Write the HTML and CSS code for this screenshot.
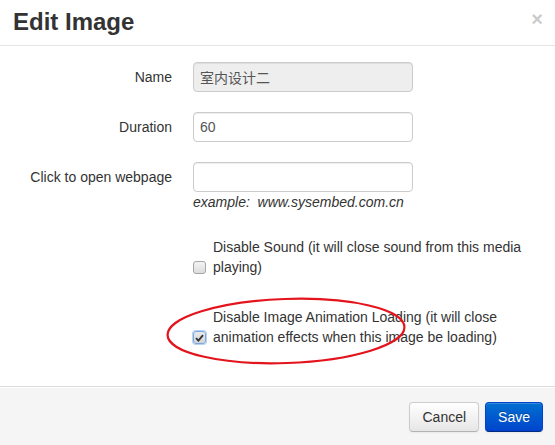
FILE: index.html
```html
<!DOCTYPE html>
<html>
<head>
<meta charset="utf-8">
<link rel="stylesheet" href="styles.css">
</head>
<body>
<div class="modal">
  <div class="modal-header">
    <h3 class="title">Edit Image</h3>
    <button class="close" type="button">×</button>
  </div>
  <div class="modal-body">
    <form class="form">
      <label class="lbl">Name</label>
      <div class="ctl"><input class="inp inp-disabled" type="text" value="室内设计二" disabled></div>

      <label class="lbl">Duration</label>
      <div class="ctl"><input class="inp" type="text" value="60"></div>

      <label class="lbl">Click to open webpage</label>
      <div class="ctl">
        <input class="inp" type="text" value="">
        <div class="help">example:&nbsp; www.sysembed.com.cn</div>
      </div>

      <div class="check-row first">
        <span class="cbox"></span>
        <span class="check-text">Disable Sound (it will close sound from this media playing)</span>
      </div>

      <div class="check-row second">
        <span class="cbox checked"><svg width="9" height="8" viewBox="0 0 9 8"><path d="M1 4.2 L3.4 6.6 L8 1.2" fill="none" stroke="#333" stroke-width="1.8"/></svg></span>
        <span class="check-text">Disable Image Animation Loading (it will close animation effects when this image be loading)</span>
      </div>
    </form>
  </div>
  <div class="modal-footer">
    <button class="btn" type="button">Cancel</button>
    <button class="btn btn-primary" type="button">Save</button>
  </div>
  <svg class="annot" width="555" height="445" viewBox="0 0 555 445">
    <ellipse cx="286" cy="331" rx="118.5" ry="32" transform="rotate(-2 286 331)" fill="none" stroke="#e3141c" stroke-width="2.2"/>
  </svg>
</div>
</body>
</html>
```

FILE: styles.css
```css
* { box-sizing: border-box; }
html, body {
  margin: 0;
  padding: 0;
  background: #fff;
}
body {
  font-family: "Liberation Sans", Arial, "Noto Sans CJK SC", sans-serif;
  font-size: 14px;
  line-height: 20px;
  color: #333;
}
.modal {
  position: relative;
  width: 555px;
  height: 445px;
  display: flex;
  flex-direction: column;
  overflow: hidden;
}
.modal-header {
  display: flex;
  justify-content: space-between;
  align-items: flex-start;
  padding: 7px 12px 8px 13px;
  border-bottom: 1px solid #e5e5e5;
}
.title {
  margin: 0;
  font-size: 24px;
  line-height: 30px;
  font-weight: bold;
  color: #333;
}
.close {
  margin: 0;
  margin-top: 2px;
  padding: 0;
  border: 0;
  background: none;
  font-family: "Liberation Sans", Arial, sans-serif;
  font-size: 20px;
  line-height: 20px;
  font-weight: bold;
  color: #000;
  opacity: 0.2;
}
.modal-body {
  padding: 16px 15px 39px 0;
  border-bottom: 1px solid #ddd;
}
.form {
  display: grid;
  grid-template-columns: 172px 1fr;
  column-gap: 21px;
  row-gap: 20px;
}
.lbl {
  text-align: right;
  padding-top: 5px;
  color: #333;
}
.inp {
  display: block;
  width: 220px;
  height: 30px;
  margin: 0;
  padding: 4px 6px;
  border: 1px solid #ccc;
  border-radius: 4px;
  background: #fff;
  font-family: "Liberation Sans", Arial, "Noto Sans CJK SC", sans-serif;
  font-size: 14px;
  line-height: 20px;
  color: #555;
  box-shadow: inset 0 1px 1px rgba(0,0,0,0.075);
}
.inp-disabled {
  background: #eee;
  color: #555;
  -webkit-text-fill-color: #555;
  opacity: 1;
}
.help {
  font-style: italic;
  color: #333;
}
.check-row {
  grid-column: 2;
  display: flex;
  align-items: flex-end;
  gap: 7px;
}
.check-row.first { margin-top: 5px; }
.check-row.second { margin-top: 10px; }
.cbox {
  flex: none;
  width: 13px;
  height: 13px;
  margin-bottom: 3px;
  border: 1px solid #a6a6a6;
  border-radius: 3px;
  background: linear-gradient(#f4f4f4, #dcdcdc);
  display: flex;
  align-items: center;
  justify-content: center;
}
.cbox.checked {
  border-color: #7aa7e0;
  box-shadow: 0 0 0 1px #b7d2f3;
  background: linear-gradient(#eaeaea, #d4d4d4);
}
.check-text {
  flex: 1;
}
.modal-footer {
  flex: 1;
  display: flex;
  justify-content: flex-end;
  align-items: flex-start;
  gap: 6px;
  padding: 15px 12px 0 0;
  background: #f5f5f5;
  box-shadow: inset 0 1px 0 #fff;
}
.btn {
  height: 30px;
  margin: 0;
  padding: 4px 12px;
  border: 1px solid #ccc;
  border-bottom-color: #b3b3b3;
  border-radius: 4px;
  background: linear-gradient(#ffffff, #e6e6e6);
  font-family: "Liberation Sans", Arial, sans-serif;
  font-size: 14px;
  line-height: 20px;
  color: #333;
  box-shadow: inset 0 1px 0 rgba(255,255,255,0.2), 0 1px 2px rgba(0,0,0,0.05);
}
.btn-primary {
  color: #fff;
  border-color: #0044cc #0044cc #002a80;
  background: linear-gradient(#0070d0, #0044cc);
  text-shadow: 0 -1px 0 rgba(0,0,0,0.25);
}
.annot {
  position: absolute;
  left: 0;
  top: 0;
  pointer-events: none;
}
```
